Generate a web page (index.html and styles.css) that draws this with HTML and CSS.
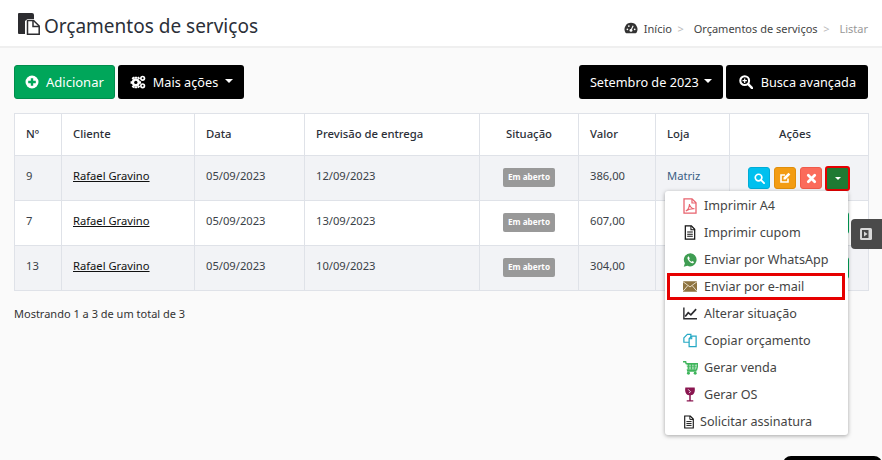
FILE: index.html
```html
<!DOCTYPE html>
<html lang="pt-BR">
<head>
<meta charset="utf-8">
<title>Orçamentos de serviços</title>
<link rel="stylesheet" href="styles.css">
</head>
<body>
<header class="top">
  <h1 class="title">
    <svg class="title-icon" viewBox="0 0 22 22" width="22" height="22"><path d="M0 1a1 1 0 0 1 1-1h13a2 2 0 0 1 2 2v4H9.500L7 8v13H1a1 1 0 0 1-1-1z" fill="#2c2c30"/><path d="M9.500 7.500h6l5.700 5.500v8.200H9.500z" fill="#fff" stroke="#2c2c30" stroke-width="1.500"/><path d="M15 7.500v6h6" fill="none" stroke="#2c2c30" stroke-width="1.500"/></svg>
    Orçamentos de serviços
  </h1>
  <nav class="crumbs">
    <svg class="crumb-icon" viewBox="0 0 16 14" width="14" height="12"><path d="M8 1a7.500 7.500 0 0 0-6.400 11.500c.2.400.6.500 1 .5h10.800c.4 0 .8-.1 1-.5A7.500 7.500 0 0 0 8 1z" fill="#333"/><circle cx="8" cy="9.800" r="1.700" fill="#fff"/><path d="M8 9.500 10.500 4.500" stroke="#fff" stroke-width="1.300"/><circle cx="3.800" cy="8.500" r="1" fill="#fff"/><circle cx="5.500" cy="4.800" r="1" fill="#fff"/><circle cx="12.300" cy="8.500" r="1" fill="#fff"/></svg>
    <a class="crumb">Início</a><span class="sep">&gt;</span>
    <a class="crumb">Orçamentos de serviços</a><span class="sep">&gt;</span>
    <span class="crumb-last">Listar</span>
  </nav>
</header>

<main class="content">
  <div class="toolbar">
    <div class="group">
      <button class="btn btn-green">
        <svg viewBox="0 0 14 14" width="14" height="14"><circle cx="7" cy="7" r="6.500" fill="#fff"/><path d="M3.200 5.800h2.600V3.200h2.400v2.600h2.600v2.400H8.200v2.600H5.800V8.200H3.200z" fill="#00a65a"/></svg>
        Adicionar
      </button>
      <button class="btn btn-black btn-more">
        <svg viewBox="0 0 18 16" width="16" height="14"><g fill="#fff"><circle cx="6.500" cy="8.500" r="4.800"/><path d="M5 2h3v2H5zM5 13h3v2H5zM.5 7h2v3h-2zM10.500 7h2v3h-2zM1.700 3.800l2-2 1.500 1.500-2 2zM8 13.700l2-2 1.500 1.500-2 2zM9.500 1.700l2 2-1.500 1.500-2-2zM1.700 13.200l2 2 1.500-1.500-2-2z"/><circle cx="14.300" cy="3.800" r="3"/><circle cx="14.300" cy="12.300" r="3"/></g><circle cx="6.500" cy="8.500" r="1.900"/><circle cx="14.300" cy="3.800" r="1.100"/><circle cx="14.300" cy="12.300" r="1.100"/></svg>
        Mais ações <span class="caret"></span>
      </button>
    </div>
    <div class="group">
      <button class="btn btn-black btn-month">Setembro de 2023 <span class="caret"></span></button>
      <button class="btn btn-black btn-search">
        <svg viewBox="0 0 16 16" width="14" height="14"><circle cx="6.500" cy="6.500" r="5" fill="none" stroke="#fff" stroke-width="2.400"/><path d="M10.500 10.500 15 15" stroke="#fff" stroke-width="2.800" stroke-linecap="round"/><path d="M4 5.800h1.800V4h1.400v1.800H9v1.400H7.200V9H5.800V7.200H4z" fill="#fff"/></svg>
        Busca avançada
      </button>
    </div>
  </div>

  <table class="grid">
    <thead>
      <tr class="head">
        <th class="c-num">Nº</th><th class="c-client">Cliente</th><th class="c-date">Data</th><th class="c-due">Previsão de entrega</th><th class="c-status center">Situação</th><th class="c-value">Valor</th><th class="c-store">Loja</th><th class="c-actions center">Ações</th>
      </tr>
    </thead>
    <tbody>
      <tr class="odd">
        <td>9</td><td><a class="client">Rafael Gravino</a></td><td>05/09/2023</td><td>12/09/2023</td><td class="center cell-status"><span class="badge">Em aberto</span></td><td>386,00</td><td class="store">Matriz</td>
        <td class="center cell-actions">
          <div class="actions">
            <span class="act act-blue"><svg viewBox="0 0 12 12" width="11" height="11"><circle cx="5" cy="5" r="3.600" fill="none" stroke="#fff" stroke-width="1.800"/><path d="M7.800 7.800 11 11" stroke="#fff" stroke-width="2" stroke-linecap="round"/></svg></span>
            <span class="act act-orange"><svg viewBox="0 0 12 12" width="12" height="12"><path d="M9 6.500V10H2V3h4" fill="none" stroke="#fff" stroke-width="1.600"/><path d="M4.500 5.500 9.500 .8l1.800 1.800-4.800 5H4.500z" fill="#fff"/></svg></span>
            <span class="act act-red"><svg viewBox="0 0 12 12" width="11" height="11"><path d="M2.500 2.500l7 7M9.500 2.500l-7 7" stroke="#fff" stroke-width="3" stroke-linecap="round"/></svg></span>
            <span class="act act-drop"><span class="caret caret-small"></span></span>
          </div>
        </td>
      </tr>
      <tr>
        <td>7</td><td><a class="client">Rafael Gravino</a></td><td>05/09/2023</td><td>13/09/2023</td><td class="center cell-status"><span class="badge">Em aberto</span></td><td>607,00</td><td class="store">Matriz</td><td></td>
      </tr>
      <tr class="odd">
        <td>13</td><td><a class="client">Rafael Gravino</a></td><td>05/09/2023</td><td>10/09/2023</td><td class="center cell-status"><span class="badge">Em aberto</span></td><td>304,00</td><td class="store">Matriz</td><td></td>
      </tr>
    </tbody>
  </table>
  <p class="summary">Mostrando 1 a 3 de um total de 3</p>
</main>

<span class="peek peek-a"></span>
<span class="peek peek-b"></span>

<ul class="menu">
  <li class="item"><svg viewBox="0 0 14 16" width="14" height="16"><path d="M1 .8h8l4 4v10.400H1z" fill="#fff" stroke="#e8636e" stroke-width="1.300"/><path d="M9 1v4h4" fill="none" stroke="#e8636e" stroke-width="1.200"/><path d="M2.800 13c2-1 3.500-4 3.700-7 .5 3 2.300 4.500 5 4.800-3-.2-6 .5-8.700 2.200z" fill="none" stroke="#e8636e" stroke-width="1.100"/></svg>Imprimir A4</li>
  <li class="item"><svg viewBox="0 0 14 16" width="14" height="15"><path d="M2 1h6.500L12 4.500V15H2z" fill="#fff" stroke="#111" stroke-width="1.300"/><path d="M8 1v4h4M4 7.500h6M4 9.800h6M4 12h6" fill="none" stroke="#111" stroke-width="1.100"/></svg>Imprimir cupom</li>
  <li class="item"><svg viewBox="0 0 16 16" width="15" height="16" class="wa"><path d="M8 .8a7 7 0 0 0-6 10.700L.8 15.300l3.900-1.100A7 7 0 1 0 8 .8z" fill="#3f9d52"/><path d="M5.500 4.300c-1 .8-1 2.200 0 3.800 1 1.700 2.500 3 4.200 3.400 1 .2 1.900-.5 2-1.500L10 9l-.9.800C8 9.300 7 8.300 6.500 7.200l.7-.9-.9-2z" fill="#fff"/></svg>Enviar por WhatsApp</li>
  <li class="item item-marked"><svg viewBox="0 0 16 12" width="14" height="11"><rect width="16" height="12" fill="#8e7441"/><path d="M0 .5l8 6 8-6M0 11.500l5.500-6.500M16 11.500 10.500 5" fill="none" stroke="#f2ead8" stroke-width="1"/></svg>Enviar por e-mail</li>
  <li class="item"><svg viewBox="0 0 16 14" width="14" height="13"><path d="M1 0v13h15" fill="none" stroke="#2c2c30" stroke-width="1.600"/><path d="M2.500 10.500 6 6l3 2.500L15 2" fill="none" stroke="#2c2c30" stroke-width="1.900"/></svg>Alterar situação</li>
  <li class="item"><svg viewBox="0 0 16 16" width="14" height="15"><path d="M1 5l4-4h4v9H1z" fill="#fff" stroke="#24a8c4" stroke-width="1.400"/><path d="M7 6l3-3h5v12H7z" fill="#fff" stroke="#24a8c4" stroke-width="1.400"/><path d="M10 3v3H7" fill="none" stroke="#24a8c4" stroke-width="1.200"/></svg>Copiar orçamento</li>
  <li class="item"><svg viewBox="0 0 16 15" width="15" height="14" class="cart"><path d="M0 .8h2.800l.5 2H16l-1.500 6.700H4.800l.3 1.300h9.200" fill="none" stroke="#3fb55c" stroke-width="1.500"/><path d="M3.800 4h11M4.100 5.700h10.400M4.400 7.500h9.800M6 3v6M9 3v6M12 3v6" stroke="#3fb55c" stroke-width="1.100"/><circle cx="5.800" cy="13.200" r="1.600" fill="#3fb55c"/><circle cx="13" cy="13.200" r="1.600" fill="#3fb55c"/></svg>Gerar venda</li>
  <li class="item"><svg viewBox="0 0 12 16" width="12" height="15" class="wine"><path d="M1 .5h10c.8 5-1 8-4.200 8.400V14H9.500v1.500h-7V14h2.700V8.900C2 8.500.2 5.500 1 .5z" fill="#8a1650"/><path d="M4 2.500 6.500 5 5 6.500" fill="none" stroke="#fff" stroke-width=".9"/></svg>Gerar OS</li>
  <li class="item item-sign"><svg viewBox="0 0 14 16" width="12" height="14"><path d="M2 1h6.500L12 4.500V15H2z" fill="#fff" stroke="#111" stroke-width="1.300"/><path d="M8 1v4h4M4 7.500h6M4 9.800h6M4 12h6" fill="none" stroke="#111" stroke-width="1.100"/></svg>Solicitar assinatura</li>
</ul>

<div class="side-tab"><svg viewBox="0 0 14 14" width="14" height="14"><rect x="1" y="1" width="12" height="12" rx="1.500" fill="#d9d9d9"/><rect x="3" y="3" width="6.500" height="8" fill="#4a4a4a"/><path d="M5 4.500 8.500 7 5 9.500z" fill="#d9d9d9"/></svg></div>
<div class="chat-stub"></div>
</body>
</html>
```
FILE: styles.css
```css
* { box-sizing: border-box; }
html, body { height: 100%; }
body {
  margin: 0;
  position: relative;
  overflow: hidden;
  background: #fafafa;
  color: #333;
  font-family: "Noto Sans", "Open Sans", sans-serif;
  font-size: 12px;
}
.top {
  height: 48px;
  display: flex;
  align-items: center;
  justify-content: space-between;
  padding: 6px 14px 0 18px;
  background: #fff;
  border-bottom: 2px solid #efefef;
}
.title {
  margin: 0;
  display: flex;
  align-items: center;
  gap: 4px;
  font-size: 19px;
  font-weight: 400;
  color: #2b2f38;
}
.title-icon { margin-top: -5px; }
.crumbs { display: flex; align-items: center; font-size: 11px; color: #444; padding-top: 4px; }
.crumb-icon { margin-right: 6px; }
.sep { color: #bbb; margin: 0 10px 0 5.500px; }
.crumb-last { color: #999; }
.content { padding: 17px 14px 0; }
.toolbar { display: flex; justify-content: space-between; height: 34px; }
.group { display: flex; gap: 3px; }
.btn {
  display: flex;
  align-items: center;
  gap: 7px;
  height: 34px;
  padding: 0 12px;
  border: 0;
  border-radius: 3px;
  font: inherit;
  font-size: 12.700px;
  color: #fff;
}
.btn-green { background: #00a65a; border: 1px solid #008d4c; padding: 0 10px; font-size: 13px; }
.btn-black { background: #000; }
.btn-more { padding-right: 11px; }
.btn-month { gap: 5px; padding: 0 11px; }
.btn-search { gap: 8px; padding: 0 12px 0 13px; }
.caret {
  display: inline-block;
  width: 0;
  height: 0;
  border-top: 4px solid #fff;
  border-left: 4px solid transparent;
  border-right: 4px solid transparent;
  margin-top: -3px;
}
.caret-small { border-top-width: 3px; border-left-width: 3px; border-right-width: 3px; margin-top: 0; }
.grid {
  width: 854px;
  margin-top: 14px;
  table-layout: fixed;
  border-collapse: collapse;
  background: #fff;
}
.grid th, .grid td {
  border: 1px solid #dfe2e8;
  padding: 0 11px;
  text-align: left;
}
.grid th { font-weight: 500; font-size: 11.300px; color: #2b2f38; height: 42px; padding-bottom: 2px; }
.grid td { font-size: 11.200px; height: 45px; color: #3a3f48; padding-bottom: 5px; }
.grid .center { text-align: center; }
.grid .c-actions { padding-right: 19px; }
.grid .cell-actions { padding-bottom: 0; }
.grid .cell-status { padding-bottom: 2px; }
.odd { background: #f2f3f6; }
.c-num { width: 47px; }
.c-client { width: 133px; }
.c-date { width: 110px; }
.c-due { width: 175px; }
.c-status { width: 99px; }
.c-value { width: 77px; }
.c-store { width: 74px; }
.c-actions { width: 139px; }
.client { color: #111; text-decoration: underline; }
.grid .store { color: #3a5f85; }
.badge {
  display: inline-block;
  padding: 0 5px;
  height: 19px;
  line-height: 18px;
  border-radius: 2px;
  background: #999;
  color: #fff;
  font-size: 8.200px;
  font-weight: 700;
}
.actions { display: flex; gap: 4px; margin: 0 -7px 0 7px; align-items: center; }
.act {
  width: 22px;
  height: 22px;
  border-radius: 3px;
  display: flex;
  align-items: center;
  justify-content: center;
}
.act-blue { background: #00c0ef; border: 1px solid #00acd6; }
.act-orange { background: #f39c12; border: 1px solid #e08e0b; }
.act-red { background: #fb6b5b; border: 1px solid #f05a4a; }
.act-drop { width: 25px; height: 25px; margin-left: -1px; background: #1f7a33; border: 2px solid #e60000; }
.summary { margin: 15px 0 0; font-size: 11px; color: #333; }
.peek { position: absolute; left: 840px; width: 9px; height: 22px; background: #00a65a; border-radius: 3px; }
.peek-a { top: 212px; }
.peek-b { top: 257px; }
.menu {
  position: absolute;
  left: 665px;
  top: 191px;
  width: 183px;
  height: 244px;
  margin: 0;
  padding: 1px 0 0;
  list-style: none;
  background: #fff;
  border-radius: 3px;
  box-shadow: 0 1px 4px rgba(0,0,0,.35);
}
.item {
  height: 27px;
  display: flex;
  align-items: center;
  gap: 7px;
  padding-left: 18px;
  font-size: 12.600px;
  color: #444;
}
.item svg { flex: none; }
.item-marked { outline: 3px solid #e60000; outline-offset: -3px; margin: 0 3px 0 2px; padding-left: 16px; }
.item-sign { padding-left: 18px; gap: 5px; }
.wine { margin: 0 1px; }
.wa, .cart { margin-right: -1px; }
.side-tab {
  position: absolute;
  left: 851px;
  top: 219px;
  width: 31px;
  height: 30px;
  display: flex;
  align-items: center;
  justify-content: center;
  padding-right: 2px;
  background: #4a4a4a;
  border-radius: 4px 0 0 4px;
}
.chat-stub {
  position: absolute;
  left: 783px;
  top: 456px;
  width: 99px;
  height: 10px;
  background: #000;
  border-radius: 8px 8px 0 0;
}
```
